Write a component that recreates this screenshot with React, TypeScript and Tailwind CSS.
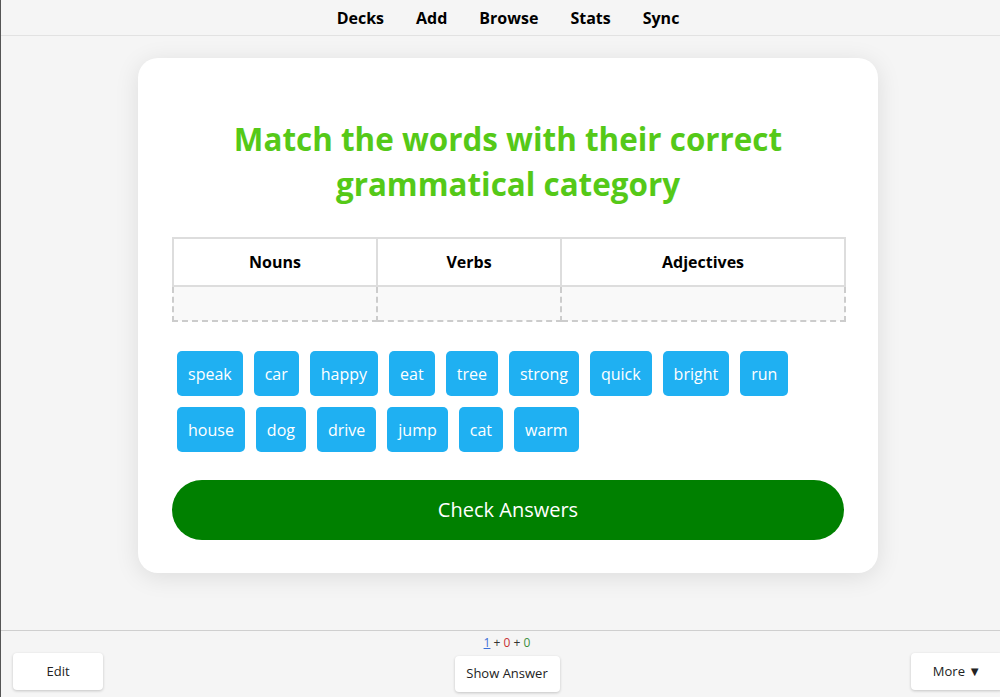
const words = [
  "speak", "car", "happy", "eat", "tree", "strong", "quick", "bright", "run",
  "house", "dog", "drive", "jump", "cat", "warm",
]

const font = { fontFamily: '"Open Sans", "Noto Sans", sans-serif' }

export default function App() {
  return (
    <div className="w-full h-[697px] overflow-hidden bg-[#f5f5f5]" style={font}>
      <div className="w-[1015px] h-[697px] flex flex-col border-l border-[#555]">
        {/* top toolbar */}
        <nav className="h-[36px] shrink-0 flex items-center justify-center gap-[32px] border-b border-[#e2e2e2] text-[16px] font-bold text-black">
          <span>Decks</span>
          <span>Add</span>
          <span>Browse</span>
          <span>Stats</span>
          <span>Sync</span>
        </nav>

        {/* review area */}
        <main className="flex-1 flex justify-center pt-[22px]">
          <div className="w-[740px] h-[515px] bg-white rounded-[20px] shadow-[0_4px_24px_rgba(0,0,0,0.1)] px-[34px] pt-[58px] flex flex-col">
            <h1 className="text-center text-[31.4px] leading-[45px] font-bold text-[#55c918]">
              Match the words with their correct
              <br />
              grammatical category
            </h1>

            <table className="mt-[31px] w-[674px] border-collapse table-fixed">
              <thead>
                <tr className="h-[48px]">
                  <th className="w-[204px] border-2 border-[#dddddd] text-[16px] font-bold text-black">Nouns</th>
                  <th className="w-[184px] border-2 border-[#dddddd] text-[16px] font-bold text-black">Verbs</th>
                  <th className="border-2 border-[#dddddd] text-[16px] font-bold text-black">Adjectives</th>
                </tr>
              </thead>
              <tbody>
                <tr className="h-[35px] bg-[#f9f9f9]">
                  <td className="border-2 border-dashed border-[#cccccc]"></td>
                  <td className="border-2 border-dashed border-[#cccccc]"></td>
                  <td className="border-2 border-dashed border-[#cccccc]"></td>
                </tr>
              </tbody>
            </table>

            <div className="mt-[29px] pl-[5px] pr-[40px] flex flex-wrap gap-x-[11px] gap-y-[11px]">
              {words.map((w) => (
                <button
                  key={w}
                  className="h-[45px] px-[11px] rounded-[5px] bg-[#1fb0f2] text-white text-[16px]"
                >
                  {w}
                </button>
              ))}
            </div>

            <button className="mt-[28px] w-[672px] h-[60px] rounded-full bg-[#008000] text-white text-[20px]">
              Check Answers
            </button>
          </div>
        </main>

        {/* bottom bar */}
        <footer className="h-[67px] shrink-0 border-t border-[#cfcfcf] flex items-end justify-between px-[12px] pb-[7px]">
          <button className="w-[90px] h-[37px] bg-white rounded-[4px] shadow-[0_1px_3px_rgba(0,0,0,0.2)] text-[13px] text-[#222]">
            Edit
          </button>
          <div className="flex flex-col items-center">
            <div className="text-[12px] leading-[16px] mb-[5px] mt-[1px]">
              <span className="text-[#3b6fd8] underline">1</span>
              <span className="text-[#333]"> + </span>
              <span className="text-[#c83232]">0</span>
              <span className="text-[#333]"> + </span>
              <span className="text-[#3d8f3d]">0</span>
            </div>
            <button className="w-[105px] h-[36px] -mb-[2px] bg-white rounded-[4px] shadow-[0_1px_3px_rgba(0,0,0,0.2)] text-[13px] text-[#222]">
              Show Answer
            </button>
          </div>
          <button className="w-[92px] h-[37px] bg-white rounded-[4px] shadow-[0_1px_3px_rgba(0,0,0,0.2)] text-[13px] text-[#222]">
            More ▼
          </button>
        </footer>
      </div>
    </div>
  )
}
